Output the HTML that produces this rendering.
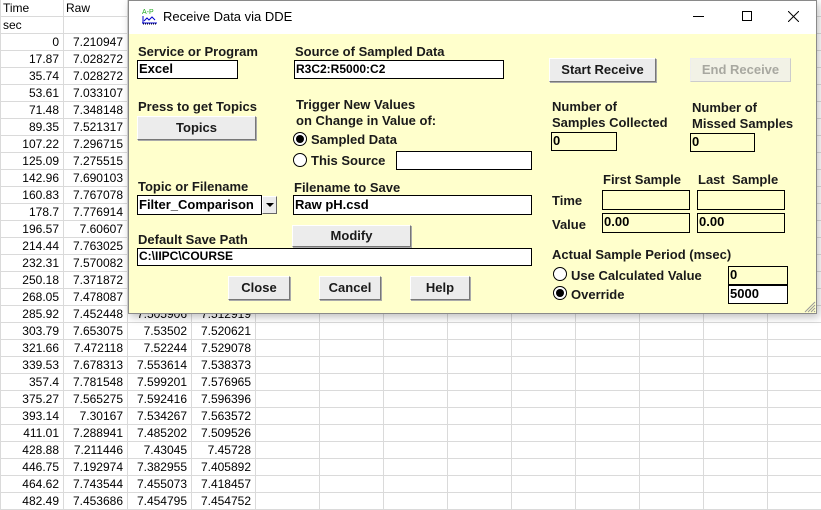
<!DOCTYPE html>
<html><head><meta charset="utf-8"><style>
*{margin:0;padding:0;box-sizing:border-box}
body{width:821px;height:509px;overflow:hidden;background:#fff;position:relative;font-family:"Liberation Sans",Arial,sans-serif}
#grid{position:absolute;left:0;top:-1px;border-collapse:collapse;table-layout:fixed;width:831px}
#grid td{height:17px;border:1px solid #dadada;font-size:12px;text-align:right;padding:0 4px 0 2px;white-space:nowrap;overflow:hidden;line-height:15px;color:#000}
#grid td.l{text-align:left;padding-left:2px}
.dlg{position:absolute;left:128px;top:0;width:689px;height:314px;background:#ffffcc;border:1px solid #8a8a8a;box-shadow:2px 3px 8px rgba(0,0,0,.25)}
.tb{position:absolute;left:0;top:0;right:0;height:33px;background:#fff}
.a{position:absolute;white-space:nowrap}
.b{font-weight:bold;font-size:13px;color:#1a1a1a}
.in{position:absolute;border:1px solid #000;background:#fff;font-weight:bold;font-size:13px;padding-left:1px;line-height:16px;white-space:nowrap;overflow:hidden}
.y{background:#ffffcc}
.btn{position:absolute;background:#ececec;border:1px solid #fff;border-right-color:#777;border-bottom-color:#777;box-shadow:1px 1px 0 #aaa;font-weight:bold;font-size:13px;text-align:center;color:#1a1a1a}
.rad{position:absolute;width:14px;height:14px;border:1px solid #000;border-radius:50%;background:#fff}
.rad.on::after{content:"";position:absolute;left:2px;top:2px;width:8px;height:8px;border-radius:50%;background:#000}
</style></head><body>
<table id="grid">
<colgroup><col style="width:63px"><col style="width:64px"><col style="width:64px"><col style="width:64px"><col style="width:64px"><col style="width:64px"><col style="width:64px"><col style="width:64px"><col style="width:64px"><col style="width:64px"><col style="width:64px"><col style="width:64px"><col style="width:64px"></colgroup>
<tr><td class="l">Time</td><td class="l">Raw</td><td></td><td></td><td></td><td></td><td></td><td></td><td></td><td></td><td></td><td></td><td></td></tr>
<tr><td class="l">sec</td><td></td><td></td><td></td><td></td><td></td><td></td><td></td><td></td><td></td><td></td><td></td><td></td></tr>
<tr><td>0</td><td>7.210947</td><td></td><td></td><td></td><td></td><td></td><td></td><td></td><td></td><td></td><td></td><td></td></tr>
<tr><td>17.87</td><td>7.028272</td><td></td><td></td><td></td><td></td><td></td><td></td><td></td><td></td><td></td><td></td><td></td></tr>
<tr><td>35.74</td><td>7.028272</td><td></td><td></td><td></td><td></td><td></td><td></td><td></td><td></td><td></td><td></td><td></td></tr>
<tr><td>53.61</td><td>7.033107</td><td></td><td></td><td></td><td></td><td></td><td></td><td></td><td></td><td></td><td></td><td></td></tr>
<tr><td>71.48</td><td>7.348148</td><td></td><td></td><td></td><td></td><td></td><td></td><td></td><td></td><td></td><td></td><td></td></tr>
<tr><td>89.35</td><td>7.521317</td><td></td><td></td><td></td><td></td><td></td><td></td><td></td><td></td><td></td><td></td><td></td></tr>
<tr><td>107.22</td><td>7.296715</td><td></td><td></td><td></td><td></td><td></td><td></td><td></td><td></td><td></td><td></td><td></td></tr>
<tr><td>125.09</td><td>7.275515</td><td></td><td></td><td></td><td></td><td></td><td></td><td></td><td></td><td></td><td></td><td></td></tr>
<tr><td>142.96</td><td>7.690103</td><td></td><td></td><td></td><td></td><td></td><td></td><td></td><td></td><td></td><td></td><td></td></tr>
<tr><td>160.83</td><td>7.767078</td><td></td><td></td><td></td><td></td><td></td><td></td><td></td><td></td><td></td><td></td><td></td></tr>
<tr><td>178.7</td><td>7.776914</td><td></td><td></td><td></td><td></td><td></td><td></td><td></td><td></td><td></td><td></td><td></td></tr>
<tr><td>196.57</td><td>7.60607</td><td></td><td></td><td></td><td></td><td></td><td></td><td></td><td></td><td></td><td></td><td></td></tr>
<tr><td>214.44</td><td>7.763025</td><td></td><td></td><td></td><td></td><td></td><td></td><td></td><td></td><td></td><td></td><td></td></tr>
<tr><td>232.31</td><td>7.570082</td><td></td><td></td><td></td><td></td><td></td><td></td><td></td><td></td><td></td><td></td><td></td></tr>
<tr><td>250.18</td><td>7.371872</td><td></td><td></td><td></td><td></td><td></td><td></td><td></td><td></td><td></td><td></td><td></td></tr>
<tr><td>268.05</td><td>7.478087</td><td></td><td></td><td></td><td></td><td></td><td></td><td></td><td></td><td></td><td></td><td></td></tr>
<tr><td>285.92</td><td>7.452448</td><td>7.505906</td><td>7.512919</td><td></td><td></td><td></td><td></td><td></td><td></td><td></td><td></td><td></td></tr>
<tr><td>303.79</td><td>7.653075</td><td>7.53502</td><td>7.520621</td><td></td><td></td><td></td><td></td><td></td><td></td><td></td><td></td><td></td></tr>
<tr><td>321.66</td><td>7.472118</td><td>7.52244</td><td>7.529078</td><td></td><td></td><td></td><td></td><td></td><td></td><td></td><td></td><td></td></tr>
<tr><td>339.53</td><td>7.678313</td><td>7.553614</td><td>7.538373</td><td></td><td></td><td></td><td></td><td></td><td></td><td></td><td></td><td></td></tr>
<tr><td>357.4</td><td>7.781548</td><td>7.599201</td><td>7.576965</td><td></td><td></td><td></td><td></td><td></td><td></td><td></td><td></td><td></td></tr>
<tr><td>375.27</td><td>7.565275</td><td>7.592416</td><td>7.596396</td><td></td><td></td><td></td><td></td><td></td><td></td><td></td><td></td><td></td></tr>
<tr><td>393.14</td><td>7.30167</td><td>7.534267</td><td>7.563572</td><td></td><td></td><td></td><td></td><td></td><td></td><td></td><td></td><td></td></tr>
<tr><td>411.01</td><td>7.288941</td><td>7.485202</td><td>7.509526</td><td></td><td></td><td></td><td></td><td></td><td></td><td></td><td></td><td></td></tr>
<tr><td>428.88</td><td>7.211446</td><td>7.43045</td><td>7.45728</td><td></td><td></td><td></td><td></td><td></td><td></td><td></td><td></td><td></td></tr>
<tr><td>446.75</td><td>7.192974</td><td>7.382955</td><td>7.405892</td><td></td><td></td><td></td><td></td><td></td><td></td><td></td><td></td><td></td></tr>
<tr><td>464.62</td><td>7.743544</td><td>7.455073</td><td>7.418457</td><td></td><td></td><td></td><td></td><td></td><td></td><td></td><td></td><td></td></tr>
<tr><td>482.49</td><td>7.453686</td><td>7.454795</td><td>7.454752</td><td></td><td></td><td></td><td></td><td></td><td></td><td></td><td></td><td></td></tr>
</table>

<div class="dlg">
 <div class="tb">
  <svg class="a" style="left:12px;top:7px" width="17" height="17" viewBox="0 0 17 17"><text x="1" y="6" font-size="7" fill="#2a2" font-family="Liberation Sans">A-P</text><path d="M1 15H16M2 8V15M3 13L6 10L8 12L11 9L14 12" stroke="#00c" fill="none" stroke-width="1"/><path d="M2 16H16" stroke="#000" stroke-dasharray="1 1"/></svg>
  <div class="a" style="left:34px;top:8px;font-size:13px;color:#000">Receive Data via DDE</div>
  <div class="a" style="left:564px;top:15px;width:11px;height:1px;background:#000"></div>
  <div class="a" style="left:613px;top:10px;width:10px;height:10px;border:1px solid #000"></div>
  <svg class="a" style="left:659px;top:10px" width="11" height="11"><path d="M0 0L11 11M11 0L0 11" stroke="#000"/></svg>
 </div>
 <div class="a b" style="left:9px;top:43px">Service or Program</div>
 <div class="in" style="left:8px;top:59px;width:101px;height:19px">Excel</div>
 <div class="a b" style="left:166px;top:43px">Source of Sampled Data</div>
 <div class="in" style="left:165px;top:59px;width:210px;height:19px;font-size:12px">R3C2:R5000:C2</div>
 <div class="btn" style="left:420px;top:57px;width:107px;height:24px;line-height:21px">Start Receive</div>
 <div class="btn" style="left:561px;top:57px;width:101px;height:24px;line-height:21px;color:#a8a8a0;background:#f2f2e6;box-shadow:none;border-color:#eee #ccc #ccc #eee">End Receive</div>

 <div class="a b" style="left:9px;top:98px">Press to get Topics</div>
 <div class="btn" style="left:8px;top:115px;width:119px;height:24px;line-height:21px">Topics</div>
 <div class="a b" style="left:167px;top:96px;line-height:16px">Trigger New Values<br>on Change in Value of:</div>
 <div class="rad on" style="left:164px;top:131px"></div>
 <div class="a b" style="left:182px;top:131px">Sampled Data</div>
 <div class="rad" style="left:164px;top:152px"></div>
 <div class="a b" style="left:182px;top:152px">This Source</div>
 <div class="in" style="left:267px;top:150px;width:136px;height:19px"></div>

 <div class="a b" style="left:423px;top:98px;line-height:16px">Number of<br>Samples Collected</div>
 <div class="in y" style="left:422px;top:131px;width:66px;height:19px">0</div>
 <div class="a b" style="left:563px;top:99px;line-height:16px">Number of<br>Missed Samples</div>
 <div class="in y" style="left:561px;top:132px;width:65px;height:19px">0</div>

 <div class="a b" style="left:9px;top:178px">Topic or Filename</div>
 <div class="in" style="left:8px;top:194px;width:125px;height:20px;line-height:17px">Filter_Comparison</div>
 <div class="a" style="left:133px;top:195px;width:15px;height:18px;background:#ececec;border:1px solid #fff;border-right-color:#666;border-bottom-color:#666"><div class="a" style="left:3px;top:6px;border:4px solid transparent;border-top:4px solid #000;border-bottom:0"></div></div>
 <div class="a b" style="left:165px;top:179px">Filename to Save</div>
 <div class="in" style="left:164px;top:194px;width:239px;height:20px;line-height:17px">Raw pH.csd</div>
 <div class="a b" style="left:9px;top:231px">Default Save Path</div>
 <div class="btn" style="left:163px;top:224px;width:119px;height:22px;line-height:19px">Modify</div>
 <div class="in" style="left:8px;top:247px;width:395px;height:18px;font-size:12px;line-height:15px">C:\IIPC\COURSE</div>
 <div class="btn" style="left:99px;top:275px;width:62px;height:24px;line-height:21px">Close</div>
 <div class="btn" style="left:190px;top:275px;width:62px;height:24px;line-height:21px">Cancel</div>
 <div class="btn" style="left:281px;top:275px;width:60px;height:24px;line-height:21px">Help</div>

 <div class="a b" style="left:474px;top:171px">First Sample</div>
 <div class="a b" style="left:569px;top:171px">Last&nbsp; Sample</div>
 <div class="a b" style="left:423px;top:192px">Time</div>
 <div class="in y" style="left:473px;top:189px;width:88px;height:20px"></div>
 <div class="in y" style="left:568px;top:189px;width:88px;height:20px"></div>
 <div class="a b" style="left:423px;top:216px">Value</div>
 <div class="in y" style="left:473px;top:212px;width:88px;height:20px">0.00</div>
 <div class="in y" style="left:568px;top:212px;width:88px;height:20px">0.00</div>
 <div class="a b" style="left:423px;top:246px">Actual Sample Period (msec)</div>
 <div class="rad" style="left:424px;top:266px"></div>
 <div class="a b" style="left:442px;top:267px">Use Calculated Value</div>
 <div class="in y" style="left:599px;top:265px;width:60px;height:19px">0</div>
 <div class="rad on" style="left:424px;top:285px"></div>
 <div class="a b" style="left:442px;top:286px">Override</div>
 <div class="in" style="left:599px;top:284px;width:60px;height:19px">5000</div>
 <svg class="a" style="left:674px;top:299px" width="13" height="13"><path d="M12 2L2 12M12 5L5 12M12 8L8 12M12 11L11 12" stroke="#999"/></svg>
</div>
</body></html>
